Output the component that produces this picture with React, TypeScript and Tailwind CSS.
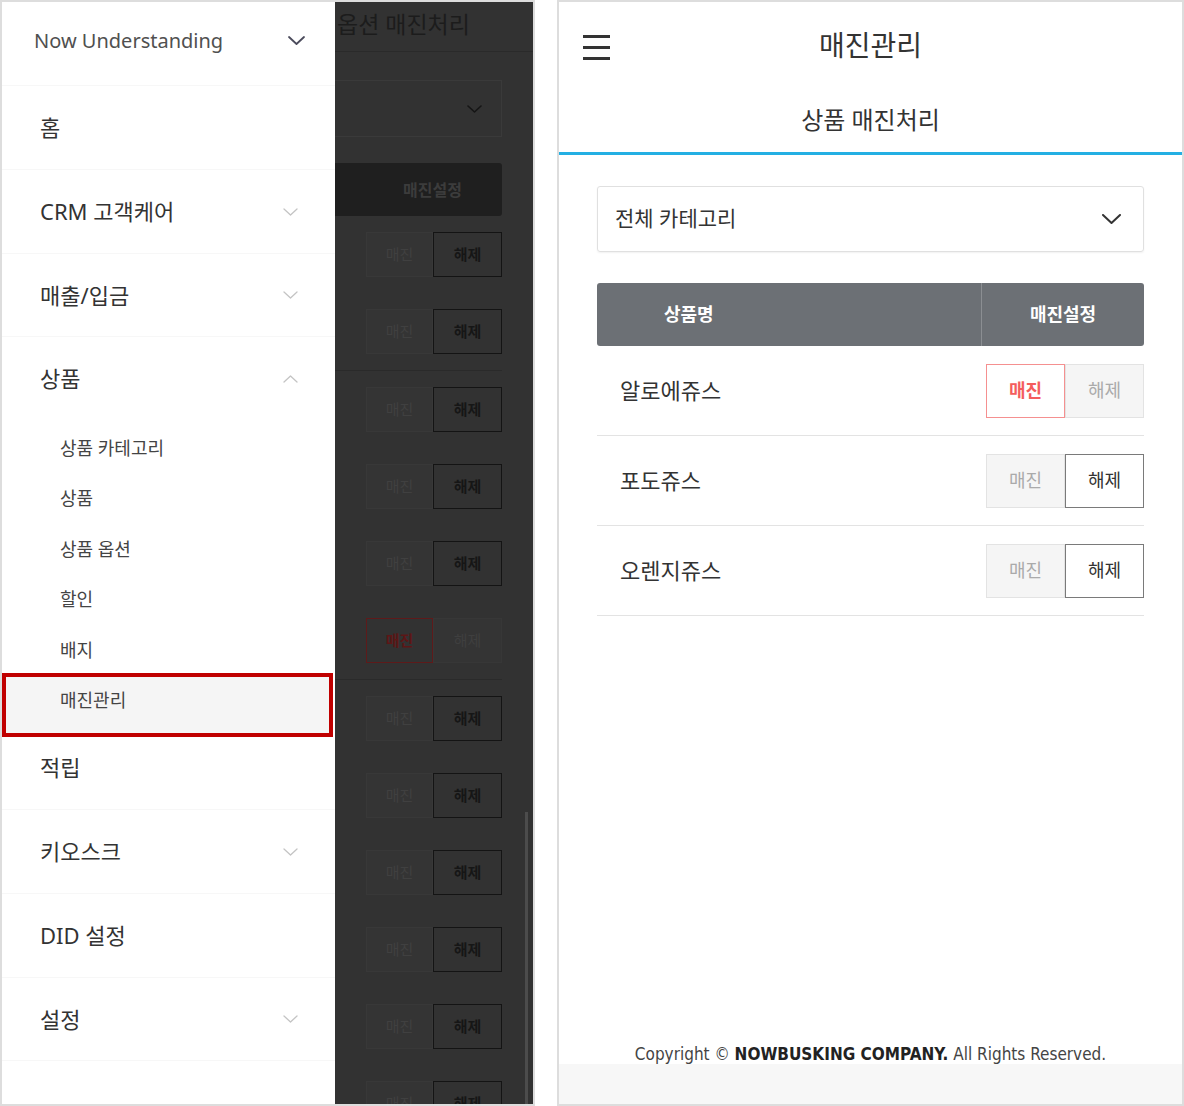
import React from "react";

const FONT = { fontFamily: "'Noto Sans', 'Noto Sans CJK KR', sans-serif" };

function Chevron({ dir = "down", className = "", w = 14, h = 8, stroke = 1.4 }: { dir?: "down" | "up"; className?: string; w?: number; h?: number; stroke?: number }) {
  return (
    <svg width={w} height={h} viewBox={`0 0 ${w} ${h}`} className={className} fill="none" stroke="currentColor" strokeWidth={stroke} strokeLinecap="round" strokeLinejoin="round">
      {dir === "down" ? (
        <polyline points={`1,1 ${w / 2},${h - 1} ${w - 1},1`} />
      ) : (
        <polyline points={`1,${h - 1} ${w / 2},1 ${w - 1},${h - 1}`} />
      )}
    </svg>
  );
}

function MainItem({ label, h, chevron, border = true }: { label: string; h: string; chevron?: "down" | "up"; border?: boolean }) {
  return (
    <div className={`${h} flex items-center justify-between pl-[38px] pr-[37px] text-[22px] text-[#333] ${border ? "border-b border-[#f7f7f7]" : ""}`}>
      <span>{label}</span>
      {chevron && <Chevron dir={chevron} className="text-[#c4c4c4]" w={15} h={8} stroke={1.3} />}
    </div>
  );
}

function SubItem({ label }: { label: string }) {
  return <div className="h-[51px] flex items-center pl-[58px] text-[18px] text-[#444]">{label}</div>;
}

function Drawer() {
  return (
    <div className="relative w-[333px] h-full bg-white shrink-0">
      <div className="absolute left-0 top-[671px] w-[331px] h-[64px] border-4 border-[#c00000] bg-[#f5f5f5]" />
      <div className="relative flex flex-col">
        <div className="h-[84px] flex items-center justify-between pl-[32px] pr-[30px] pb-[6px] text-[20px] text-[#505050] border-b border-[#f7f7f7]">
          <span>Now Understanding</span>
          <Chevron className="text-[#4b4b5c]" w={17} h={9} stroke={1.8} />
        </div>
        <MainItem label="홈" h="h-[84px]" />
        <MainItem label="CRM 고객케어" h="h-[84px]" chevron="down" />
        <MainItem label="매출/입금" h="h-[83px]" chevron="down" />
        <MainItem label="상품" h="h-[83px]" chevron="up" border={false} />
        <div className="h-[306px] flex flex-col pt-[3px]">
          <SubItem label="상품 카테고리" />
          <SubItem label="상품" />
          <SubItem label="상품 옵션" />
          <SubItem label="할인" />
          <SubItem label="배지" />
          <SubItem label="매진관리" />
        </div>
        <MainItem label="적립" h="h-[84px]" />
        <MainItem label="키오스크" h="h-[84px]" chevron="down" />
        <MainItem label="DID 설정" h="h-[84px]" />
        <MainItem label="설정" h="h-[83px]" chevron="down" />
      </div>
    </div>
  );
}

function OverlayRow({ red }: { red?: boolean }) {
  return (
    <div className="h-[77px] flex items-center justify-end shrink-0">
      <div className="flex h-[45px]">
        {red ? (
          <>
            <div className="w-[67px] flex items-center justify-center border border-[#5e1a1a] text-[15px] font-bold text-[#5c1616]">매진</div>
            <div className="w-[69px] flex items-center justify-center border border-[#373737] bg-[#343434] text-[15px] text-[#3f3f3f]">해제</div>
          </>
        ) : (
          <>
            <div className="w-[67px] flex items-center justify-center border border-[#383838] bg-[#343434] text-[15px] text-[#404040]">매진</div>
            <div className="w-[69px] flex items-center justify-center border border-[#141414] text-[15px] font-bold text-[#161616]">해제</div>
          </>
        )}
      </div>
    </div>
  );
}

function Overlay() {
  const rows = Array.from({ length: 12 }, (_, i) => i);
  return (
    <div className="relative flex-1 h-full bg-[#323232] overflow-hidden">
      <div className="flex flex-col pr-[31px]">
        <div className="h-[50px] flex items-center pl-[2px] text-[23px] text-[#1c1c1c] border-b border-[#2a2a2a] -mr-[31px] pb-[4px] whitespace-nowrap">옵션 매진처리</div>
        <div className="mt-[28px] h-[57px] -ml-[30px] border border-[#3a3a3a] flex items-center justify-end pr-[19px]">
          <Chevron className="text-[#151515]" w={15} h={8} stroke={1.6} />
        </div>
        <div className="mt-[26px] h-[53px] -ml-[30px] bg-[#1f1f1f] rounded-[3px] flex items-center justify-end pr-[40px] text-[16px] font-bold text-[#3c3c3c]">매진설정</div>
        {rows.map((i) => (
          <div key={i} className={i === 1 || i === 5 ? "border-b border-[#2a2a2a]" : ""}>
            <OverlayRow red={i === 5} />
          </div>
        ))}
      </div>
      <div className="absolute right-[5px] top-[810px] w-[3px] h-[300px] bg-[#4c4c4c]" />
    </div>
  );
}

function ProductRow({ name, soldOut }: { name: string; soldOut?: boolean }) {
  return (
    <div className="h-[90px] flex items-center justify-between border-b border-[#e3e3e3] pl-[23px]">
      <span className="text-[22px] text-[#333]">{name}</span>
      <div className="flex h-[54px]">
        {soldOut ? (
          <>
            <div className="w-[79px] flex items-center justify-center border border-[#f59090] bg-white text-[18px] font-bold text-[#f45d5d]">매진</div>
            <div className="w-[79px] flex items-center justify-center border border-[#e3e3e3] bg-[#f5f5f5] text-[18px] text-[#aaa]">해제</div>
          </>
        ) : (
          <>
            <div className="w-[79px] flex items-center justify-center border border-[#e3e3e3] bg-[#f5f5f5] text-[18px] text-[#aaa]">매진</div>
            <div className="w-[79px] flex items-center justify-center border border-[#7a7a7a] bg-white text-[18px] text-[#333]">해제</div>
          </>
        )}
      </div>
    </div>
  );
}

function RightPhone() {
  return (
    <div className="w-[627px] h-full border-2 border-[#ddd] bg-white flex flex-col">
      <div className="h-[86px] relative flex items-center justify-center">
        <div className="absolute left-[24px] top-[33px] flex flex-col gap-[8px]">
          <div className="w-[27px] h-[3px] bg-[#333]" />
          <div className="w-[27px] h-[3px] bg-[#333]" />
          <div className="w-[27px] h-[3px] bg-[#333]" />
        </div>
        <span className="text-[28px] text-[#333]">매진관리</span>
      </div>
      <div className="h-[64px] flex items-center justify-center text-[24px] text-[#333]">상품 매진처리</div>
      <div className="h-[3px] bg-[#23afe3]" />
      <div className="flex-1 flex flex-col px-[38px] pt-[31px]">
        <div className="h-[66px] border border-[#e0e0e0] rounded-[3px] shadow-[0_1px_2px_rgba(0,0,0,0.06)] flex items-center justify-between pl-[17px] pr-[22px]">
          <span className="text-[21px] text-[#333]">전체 카테고리</span>
          <Chevron className="text-[#333]" w={19} h={10} stroke={2} />
        </div>
        <div className="mt-[31px] h-[63px] bg-[#6c7075] rounded-[3px] flex text-white font-bold text-[18px]">
          <div className="w-[384px] flex items-center pl-[67px]">상품명</div>
          <div className="flex-1 flex items-center justify-center border-l border-[#8b8e92]">매진설정</div>
        </div>
        <ProductRow name="알로에쥬스" soldOut />
        <ProductRow name="포도쥬스" />
        <ProductRow name="오렌지쥬스" />
      </div>
      <div className="h-[20px] leading-[20px] text-center text-[17px] text-[#444] whitespace-nowrap" style={{ fontFamily: "'DejaVu Sans Condensed', 'Liberation Sans', sans-serif" }}>
        Copyright © <b className="text-[#222]">NOWBUSKING COMPANY.</b> All Rights Reserved.
      </div>
      <div className="h-[40px] bg-[#f7f7f7]" />
    </div>
  );
}

export default function App() {
  return (
    <div className="w-[1184px] h-[1106px] bg-white flex" style={FONT}>
      <div className="w-[535px] h-full border-2 border-[#ddd] flex overflow-hidden">
        <Drawer />
        <Overlay />
      </div>
      <div className="w-[22px]" />
      <RightPhone />
    </div>
  );
}
